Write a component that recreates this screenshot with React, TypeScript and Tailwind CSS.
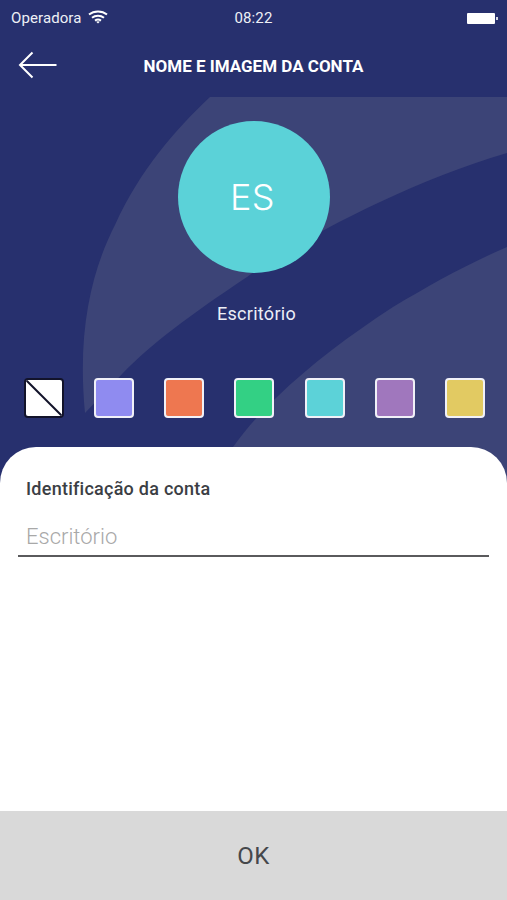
import { useState } from 'react';

const swatches = ['#8f8bf0', '#ee7750', '#33d084', '#5cd2d8', '#a077bd', '#e2ca62'];

function WifiIcon() {
    return (
        <svg width="20" height="14" viewBox="0 0 20 14" fill="none" stroke="#fff" strokeWidth="2" className="ml-[6px] -mt-[3px]">
            <path d="M1 4.6C6 .4 14 .4 19 4.6" />
            <path d="M4 7.8C7.4 5 12.6 5 16 7.8" />
            <path d="M7 10.6C8.7 9.4 11.3 9.4 13 10.6" />
            <path d="M10 13.4l-1.8-1.6c1-.7 2.6-.7 3.6 0z" fill="#fff" stroke="none" />
        </svg>
    );
}

function StatusBar() {
    return (
        <div className="flex h-[36px] items-center justify-between pl-[11px] pr-[9px] pt-px text-[15px] tracking-[0.1px] text-[#eef0f6] [font-family:Roboto,sans-serif]">
            <div className="flex w-[190px] items-center">
                <span>Operadora</span>
                <WifiIcon />
            </div>
            <span className="-ml-[2px]">08:22</span>
            <div className="flex w-[190px] items-center justify-end">
                <div className="h-[11px] w-[28px] rounded-[1px] bg-white" />
                <div className="ml-[1px] h-[3px] w-[2px] bg-white/80" />
            </div>
        </div>
    );
}

function Header() {
    return (
        <div className="relative flex h-[61px] items-center justify-center text-[17px] font-bold text-white [font-family:Roboto,sans-serif]">
            <svg width="40" height="28" viewBox="0 0 40 28" fill="none" stroke="#fff" strokeWidth="2" className="absolute left-[18px] top-[15px]">
                <path d="M38.5 14H2" />
                <path d="M14.5 1.5L2 14l12.5 12.5" />
            </svg>
            <span>NOME E IMAGEM DA CONTA</span>
        </div>
    );
}

function Background() {
    // the two pale bands behind the avatar
    return (
        <svg width="507" height="400" viewBox="0 97 507 400" className="absolute left-0 top-[97px]">
            <path
                d="M210 97H507V153C400 185 300 240 247 277C190 315 150 345 123 373L85 413C77 330 92 270 115 225C140 170 175 130 210 97Z"
                fill="#3c4477"
            />
            <path d="M507 247C465 265 430 285 393 307C350 335 310 365 277 397C260 413 245 430 233 447V497H507Z" fill="#3c4477" />
        </svg>
    );
}

export default function App() {
    const [name] = useState('Escritório');

    return (
        <div className="relative flex h-[900px] w-full flex-col overflow-hidden bg-[#27306e]">
            <Background />

            <div className="relative flex h-[447px] flex-col">
                <StatusBar />
                <Header />

                <div className="mt-[24px] flex flex-col items-center">
                    <div className="flex size-[152px] items-center justify-center rounded-full bg-[#5bd2d8] pr-[2px] text-[36px] tracking-[0.5px] text-white [font-family:Inter,sans-serif] font-light">
                        ES
                    </div>
                    <span className="mt-[29px] pl-[6px] text-[18px] leading-[24px] tracking-[0.3px] text-[#eceef6] [font-family:Roboto,sans-serif]">{name}</span>
                </div>

                <div className="mt-[52px] flex justify-between pl-[24px] pr-[22px]">
                    <div className="relative size-[40px] overflow-hidden rounded-[4px] border-2 border-[#12132a] bg-white">
                        <svg width="36" height="36" viewBox="0 0 36 36" className="absolute inset-0">
                            <path d="M0 0L36 36" stroke="#12132a" strokeWidth="2" />
                        </svg>
                    </div>
                    {swatches.map((color) => (
                        <div key={color} className="size-[40px] rounded-[4px] border-2 border-[#f1f1f8]" style={{ backgroundColor: color }} />
                    ))}
                </div>
            </div>

            <div className="relative flex-1 rounded-t-[36px] bg-white px-[18px] pt-[30px]">
                <div className="pl-[8px] text-[18px] leading-[24px] font-medium tracking-[0.25px] text-[#3b3e44] [font-family:Roboto,sans-serif]">Identificação da conta</div>
                <div className="mt-[22px] border-b-2 border-[#5a5a5c] pb-[4px] pl-[8px] text-[22px] leading-[28px] font-light text-[#a8a8a8] [font-family:Roboto,sans-serif]">
                    {name}
                </div>
            </div>

            <div className="relative flex h-[89px] items-center justify-center bg-[#d9d9d9] text-[24px] tracking-[0.5px] text-[#45474b] [font-family:Roboto,sans-serif]">
                OK
            </div>
        </div>
    );
}
